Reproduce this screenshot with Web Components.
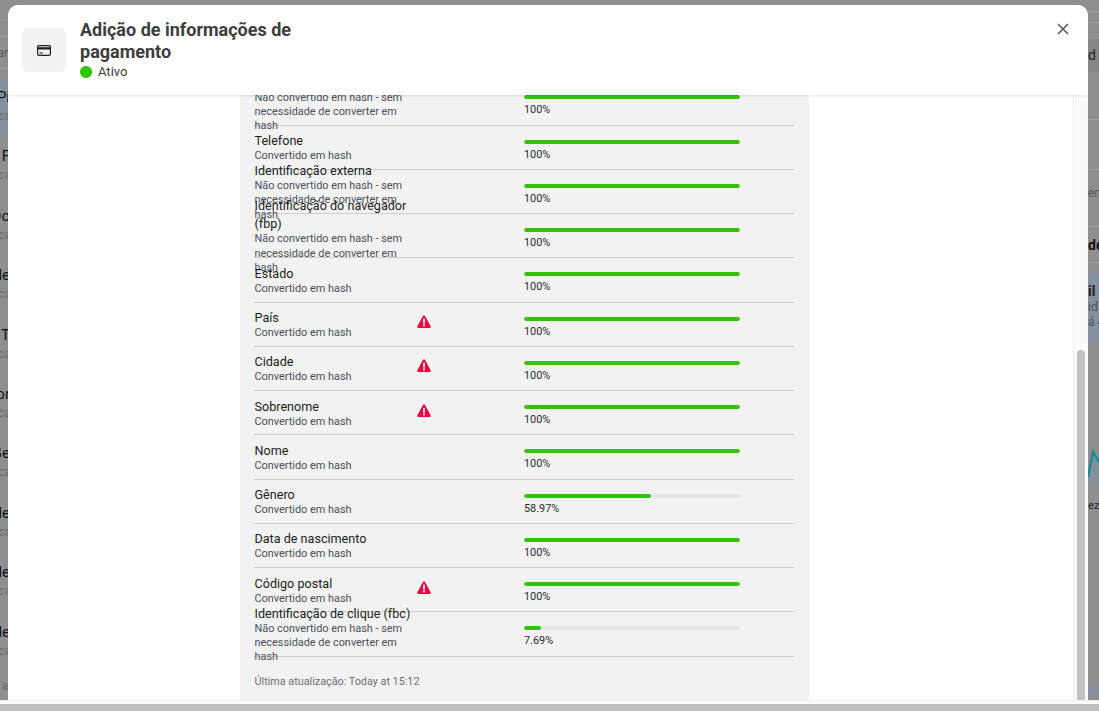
<!DOCTYPE html>
<html lang="pt"><head><meta charset="utf-8"><style>
html,body{margin:0;padding:0;height:100%;overflow:hidden;background:#8f8f8f;font-family:Roboto,"Liberation Sans",sans-serif}
</style></head><body>
<app-shell></app-shell>
<script>
const warn=`<svg width="14" height="13" viewBox="0 0 16 14" preserveAspectRatio="none"><path d="M8 .4c.5 0 .9.3 1.2.8l6.4 10.9c.5.9-.1 1.9-1.1 1.9H1.500C.5 14-.1 13 .4 12.100L6.800 1.200C7.100.7 7.500.4 8 .4z" fill="#e8073f"/><rect x="7" y="4" width="2" height="5.200" fill="#fff"/><rect x="7" y="10.200" width="2" height="2" fill="#fff"/></svg>`;

class SideStrip extends HTMLElement{
  connectedCallback(){
    const s=this.attachShadow({mode:'open'});
    const items=JSON.parse(this.getAttribute('items'));
    s.innerHTML=`<style>
    :host{display:flex;flex-direction:column;align-items:flex-end;width:8px;height:711px;overflow:hidden;box-sizing:border-box}
    .top{flex:none;width:8px;height:23px;border-bottom:1px solid #858585;box-sizing:border-box}
    .top2{flex:none;width:8px;height:14px;border-bottom:1px solid #a0a0a0;box-sizing:border-box}
    .top3{flex:none;width:8px;height:32px;border-bottom:1px solid #a0a0a0;box-sizing:border-box;font-size:12px;line-height:32px;color:#555;display:flex;justify-content:flex-end;white-space:nowrap;overflow:hidden}
    .gap{flex:none;height:9px;width:8px}
    .i{flex:none;height:59.4px;width:8px;display:flex;flex-direction:column;align-items:flex-end;white-space:nowrap;box-sizing:border-box;padding-top:10px;overflow:hidden}
    .i.on{background:#84909f;height:57px;margin-bottom:2.4px}
    .a{font-size:15px;line-height:18px;color:#111;margin-right:-2px}
    .b{font-size:12px;line-height:18px;margin-top:1px;color:#6a6a6a;margin-right:-3px}
    </style><div class="top"></div><div class="top2"></div><div class="top3"><span>ar</span></div><div class="gap"></div>`+items.map((t,i)=>`<div class="i ${i==0?'on':''}"><span class="a">${t}</span><span class="b">ca</span></div>`).join('')+`<div class="i" style="padding-top:4px"><span class="b" style="margin-right:0">a</span></div>`;
  }
}
customElements.define('side-strip',SideStrip);

class RightStrip extends HTMLElement{
  connectedCallback(){
    const s=this.attachShadow({mode:'open'});
    s.innerHTML=`<style>
    :host{display:flex;flex-direction:column;width:11px;height:711px;overflow:hidden;white-space:nowrap;font-size:14px;color:#111}
    div{width:11px;overflow:hidden;flex:none;box-sizing:border-box}
    .l{border-bottom:1px solid #a0a0a0}
    .de{height:36px;font-weight:700;font-size:14px;line-height:36px;border-bottom:1px solid #a0a0a0}
    .sel{height:68px;background:#84909f;font-size:12px;line-height:15px;color:#4c4f55}
    .sel b{display:block;font-size:14px;color:#222;margin-top:9px;line-height:18px}
    .ez{font-size:11px;color:#333;line-height:14px;font-weight:500;height:201px;padding-top:14px}
    .band{height:7px;background:#84909f}
    </style>
    <div class="l" style="height:12px"></div>
    <div class="l" style="height:11px"></div>
    <div style="height:16px"></div>
    <div style="height:33px;background:#888;line-height:32px;color:#222">d</div>
    <div class="l" style="height:48px"></div>
    <div class="l" style="height:50px;border-color:#a0a0a0"></div>
    <div class="l" style="height:57px;font-size:12px;line-height:46px;color:#555">en</div>
    <div class="de">de</div>
    <div style="height:10px"></div>
    <div class="sel"><b>il</b>id<br>á 4</div>
    <div style="height:144px"><svg width="11" height="144" viewBox="0 0 11 144"><path d="M0 136 L5 111 L11 121 V144 H0Z" fill="#84909a"/><path d="M0 136 L5 111 L11 121" fill="none" stroke="#0a8a96" stroke-width="2"/></svg></div>
    <div class="ez">ez</div>
    <div class="band"></div>`;
  }
}
customElements.define('right-strip',RightStrip);

class ProgressBar extends HTMLElement{
  connectedCallback(){
    const v=this.getAttribute('value');
    const s=this.attachShadow({mode:'open'});
    s.innerHTML=`<style>
    :host{display:block;width:216px;color:#2a2c30;font-size:10.9px;line-height:14px;margin-top:6px}
    .t{height:4px;border-radius:2px;background:#e4e4e4;overflow:hidden;margin-bottom:4px}
    .f{height:100%;border-radius:2px;background:#31c400}
    </style><div class="t"><div class="f" style="width:${v}%"></div></div><div>${v}%</div>`;
  }
}
customElements.define('progress-bar',ProgressBar);

class ParamRow extends HTMLElement{
  connectedCallback(){
    const s=this.attachShadow({mode:'open'});
    const d=this.dataset;
    s.innerHTML=`<style>
    :host{display:flex;align-items:center;height:44.25px;box-sizing:border-box;padding-top:1px;border-bottom:1px solid #cfcfcf;flex:none}
    .n{width:160px;flex:none;padding-left:.5px;box-sizing:border-box}
    .a{font-size:12.6px;line-height:18px;color:#1c1e21;margin-bottom:-1px}
    .b{font-size:10.9px;line-height:14.3px;color:#4b4f56}
    .w{width:110px;flex:none;padding-left:3px;box-sizing:border-box;display:flex;position:relative;top:-3px}
    </style><div class="n"><div class="a">${d.name}</div><div class="b">${d.sub}</div></div>
    <div class="w">${d.warn?warn:''}</div><progress-bar value="${d.value}"></progress-bar>`;
  }
}
customElements.define('param-row',ParamRow);

class ParamPanel extends HTMLElement{
  connectedCallback(){
    const s=this.attachShadow({mode:'open'});
    const C='Convertido em hash',N='Não convertido em hash - sem necessidade de converter em hash';
    const rows=[['Endereço de IP',N,100],['Telefone',C,100],['Identificação externa',N,100],['Identificação do navegador (fbp)',N,100],['Estado',C,100],['País',C,100,1],['Cidade',C,100,1],['Sobrenome',C,100,1],['Nome',C,100],['Gênero',C,58.97],['Data de nascimento',C,100],['Código postal',C,100,1],['Identificação de clique (fbc)',N,7.69]];
    s.innerHTML=`<style>
    :host{display:flex;flex-direction:column;width:569px;box-sizing:border-box;padding:0 15px 0 14px;background:#f2f2f2;flex:none;margin-left:232px}
    .u{font-size:10.8px;line-height:14px;color:#6d6f73;padding:18px 0 11.4px .5px}
    </style><div id="r" style="display:contents"></div><div class="u">Última atualização: Today at 15:12</div>`;
    const host=s.getElementById('r');
    rows.forEach(r=>{const e=document.createElement('param-row');e.dataset.name=r[0];e.dataset.sub=r[1];e.dataset.value=r[2];if(r[3])e.dataset.warn='1';host.appendChild(e);});
  }
}
customElements.define('param-panel',ParamPanel);

class ModalHeader extends HTMLElement{
  connectedCallback(){
    const s=this.attachShadow({mode:'open'});
    s.innerHTML=`<style>
    :host{display:flex;align-items:flex-start;height:90px;box-sizing:border-box;padding:14px 19px 0 14px;background:#fff;border-radius:10px 10px 0 0;box-shadow:0 1px 3px rgba(0,0,0,.1);position:relative;z-index:1;flex:none}
    .ic{width:44px;height:44px;margin-top:9px;border-radius:5px;background:#f2f2f2;display:flex;align-items:center;justify-content:center;flex:none}
    .m{margin-left:14px;width:240px}
    h1{margin:0;font-size:18px;line-height:22px;font-weight:700;color:#3d3d3d}
    .st{display:flex;align-items:center;font-size:13px;line-height:16px;color:#3d3d3d;margin-top:1px}
    .d{width:11.5px;height:11.5px;border-radius:50%;background:#31c400;margin-right:6.500px}
    .x{margin-left:auto;margin-top:4px;display:flex}
    </style>
    <div class="ic"><svg width="14" height="11" viewBox="0 0 14 11"><rect x=".6" y=".6" width="12.800" height="9.800" rx="1.400" fill="none" stroke="#1c1e21" stroke-width="1.200"/><rect x="1" y="2.200" width="12" height="2.300" fill="#1c1e21"/><rect x="2.500" y="7.500" width="3.500" height="1" fill="#1c1e21"/></svg></div>
    <div class="m"><h1>Adição de informações de pagamento</h1><div class="st"><span class="d"></span>Ativo</div></div>
    <div class="x"><svg width="12" height="12" viewBox="0 0 12 12"><path d="M1 1l10 10M11 1L1 11" stroke="#5a5d62" stroke-width="1.700" fill="none"/></svg></div>`;
  }
}
customElements.define('modal-header',ModalHeader);

class ModalDialog extends HTMLElement{
  connectedCallback(){
    const s=this.attachShadow({mode:'open'});
    s.innerHTML=`<style>
    :host{position:absolute;left:8px;top:5px;width:1080px;height:695px;background:#fff;border-radius:10px 10px 0 0;display:flex;flex-direction:column;overflow:hidden}
    .body{flex:1;display:flex;min-height:0}
    .scroll{flex:1;min-width:0;display:flex;flex-direction:column;justify-content:flex-end;overflow:hidden}
    .bar{width:15px;flex:none;background:#fafafa;border-left:1px solid #ececec;display:flex;flex-direction:column;justify-content:flex-end;box-sizing:border-box;padding:0 3px}
    .th{width:8px;height:350px;background:#c1c1c1;border-radius:4px 4px 0 0}
    </style><modal-header></modal-header>
    <div class="body"><div class="scroll"><param-panel></param-panel></div><div class="bar"><div class="th"></div></div></div>`;
  }
}
customElements.define('modal-dialog',ModalDialog);

class AppShell extends HTMLElement{
  connectedCallback(){
    const s=this.attachShadow({mode:'open'});
    s.innerHTML=`<style>
    :host{display:flex;justify-content:space-between;position:relative;width:1099px;height:711px;overflow:hidden;background:#8f8f8f}
    .hb{position:absolute;left:0;right:0;bottom:0;height:11px;box-sizing:border-box;background:#fafafa;border-top:1px solid #ececec;padding-top:3px}
    .hb i{display:block;height:7px;background:#c1c1c1}
    </style>
    <side-strip items='["Pi","a F","Do","le","T","or","Ge","le","le","le"]'></side-strip>
    <right-strip></right-strip>
    <modal-dialog></modal-dialog>
    <div class="hb"><i></i></div>`;
  }
}
customElements.define('app-shell',AppShell);
</script></body></html>
